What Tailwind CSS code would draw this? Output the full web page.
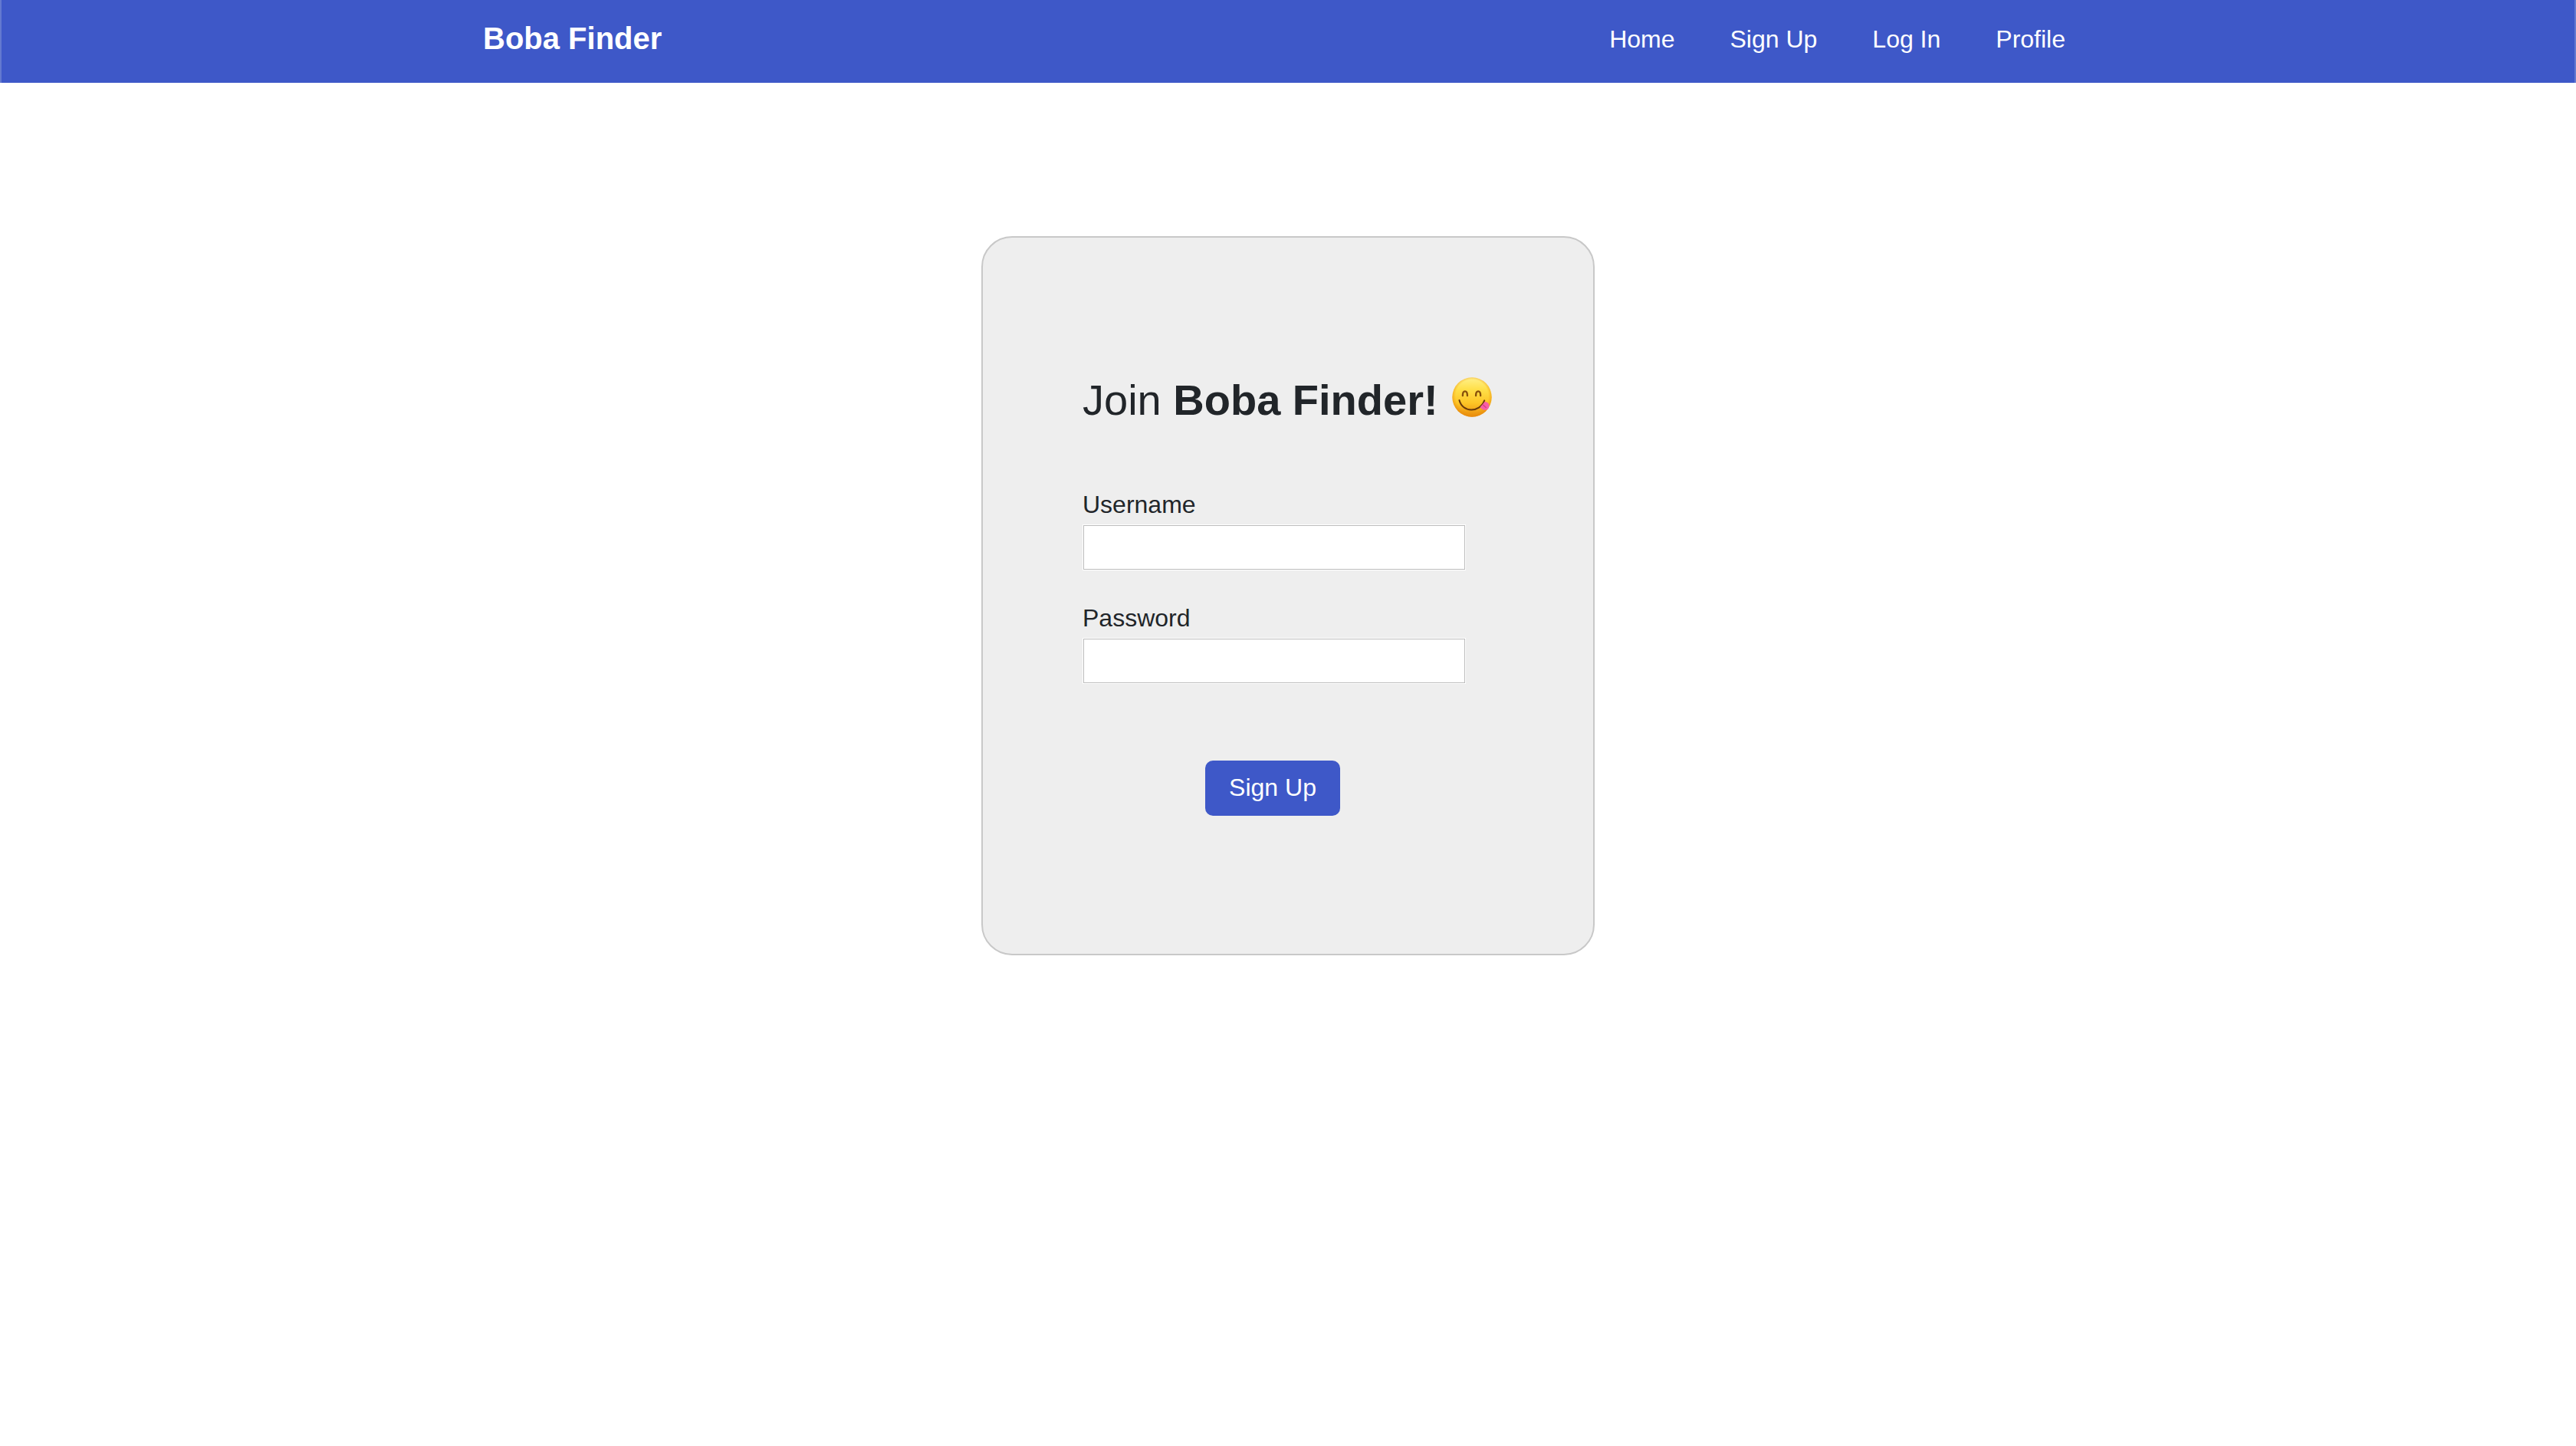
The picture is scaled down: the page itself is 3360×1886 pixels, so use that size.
<!DOCTYPE html>
<html lang="en">
<head>
<meta charset="utf-8">
<meta name="viewport" content="width=device-width, initial-scale=1">
<title>Boba Finder</title>
<script src="https://cdn.jsdelivr.net/npm/@tailwindcss/browser@4"></script>
</head>
<body class="min-h-screen bg-white font-['Liberation_Sans',Arial,sans-serif] text-[32px] leading-[48px] text-[#212529]">
  <header class="border-x-2 border-[#6479d0] bg-[#3e58c8] text-white">
    <div class="mx-auto flex h-[108px] max-w-[2280px] items-center justify-between pb-2 pl-[90px] pr-[126px]">
      <a href="#" class="text-[40px] leading-[60px] font-bold">Boba Finder</a>
      <nav class="flex gap-[72px] pt-0.5">
        <a href="#">Home</a>
        <a href="#">Sign Up</a>
        <a href="#">Log In</a>
        <a href="#">Profile</a>
      </nav>
    </div>
  </header>

  <main class="mx-auto mt-[200px] w-full max-w-[800px] rounded-[40px] border-2 border-[#c8c8c8] bg-[#eeeeee] px-[130px] pt-[178px] pb-[180px]">
    <h1 class="flex items-center gap-[18px] text-[56px] leading-[68px] whitespace-nowrap">
      <span>Join <strong class="font-bold">Boba Finder!</strong></span>
      <svg class="mb-2 size-[52px] shrink-0" viewBox="44 37 154 154" role="img" aria-label="Face savoring food">
        <defs>
          <linearGradient id="face" x1="0" y1="0" x2="0" y2="1">
            <stop offset="0" stop-color="#fff08a"/>
            <stop offset=".3" stop-color="#ffe04a"/>
            <stop offset=".65" stop-color="#fdc526"/>
            <stop offset="1" stop-color="#e88a0c"/>
          </linearGradient>
          <radialGradient id="edge" cx=".5" cy=".47" r=".53">
            <stop offset=".78" stop-color="#f09a10" stop-opacity="0"/>
            <stop offset="1" stop-color="#e88a0c" stop-opacity=".75"/>
          </radialGradient>
        </defs>
        <circle cx="121" cy="114" r="76" fill="url(#face)"/>
        <circle cx="121" cy="114" r="76" fill="url(#edge)"/>
        <path d="M85 108C85 86 103 86 103 108M136 108C136 86 154 86 154 108" fill="none" stroke="#87500b" stroke-width="7" stroke-linecap="round"/>
        <path d="M72 126C84 174 150 176 169 127" fill="none" stroke="#68390a" stroke-width="6" stroke-linecap="round"/>
        <path d="M152 153L171 131C184 133 190 143 186 154C181 166 165 168 152 153Z" fill="#f75fa5"/>
        <path d="M164 144L175 154" stroke="#d83c85" stroke-width="4" stroke-linecap="round"/>
      </svg>
    </h1>

    <form class="mt-[78px] flex max-w-[500px] flex-col items-start" onsubmit="return false">
      <label for="username" class="mb-0.5">Username</label>
      <input id="username" name="username" type="text" autocomplete="username" class="h-[60px] w-full border border-white bg-white px-2 inset-ring inset-ring-[#bcbcbc]">
      <label for="password" class="mt-[38px] mb-0.5">Password</label>
      <input id="password" name="password" type="password" autocomplete="new-password" class="h-[60px] w-full border border-white bg-white px-2 inset-ring inset-ring-[#bcbcbc]">
      <button type="submit" class="mt-[100px] ml-40 h-[72px] w-44 rounded-[10px] bg-[#3e58c8] pb-0.5 text-white">Sign Up</button>
    </form>
  </main>
</body>
</html>
